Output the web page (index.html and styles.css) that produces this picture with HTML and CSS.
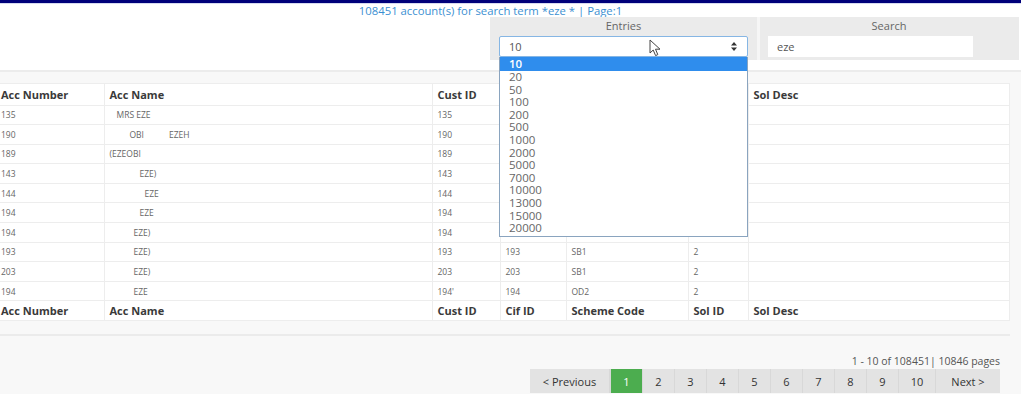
FILE: index.html
```html
<!DOCTYPE html>
<html>
  <head>
    <title>Accounts</title>
    <link rel="stylesheet" href="styles.css">
  </head>
  <body>
    <div class="topbar"></div>
    <div class="summary">108451 account(s) for search term *eze * | Page:1</div>

    <div class="toolbar">
      <div class="filters">
        <div class="filter">
          <label>Entries</label>
          <div class="select-wrap">
            <div class="select">
              <span>10</span>
              <svg class="caret" width="6" height="9" viewBox="0 0 6 9">
                <path d="M3 0 L6 3.5 L0 3.5 Z M3 9 L6 5.5 L0 5.5 Z" fill="#333"/>
              </svg>
            </div>
            <svg class="pointer" width="13" height="18" viewBox="0 0 13 18">
              <path d="M1 1 L1 14 L4.2 11 L6.6 16.6 L8.8 15.6 L6.5 10.2 L11 10.2 Z" fill="#fff" stroke="#444" stroke-width="1" stroke-linejoin="round"/>
            </svg>
            <ul class="options">
              <li class="active">10</li>
              <li>20</li>
              <li>50</li>
              <li>100</li>
              <li>200</li>
              <li>500</li>
              <li>1000</li>
              <li>2000</li>
              <li>5000</li>
              <li>7000</li>
              <li>10000</li>
              <li>13000</li>
              <li>15000</li>
              <li>20000</li>
            </ul>
          </div>
        </div>
        <div class="filter">
          <label>Search</label>
          <input type="text" class="search-input" value="eze">
        </div>
      </div>
    </div>

    <div class="content">
      <table class="accounts">
        <colgroup>
          <col class="c-num">
          <col class="c-name">
          <col class="c-cust">
          <col class="c-cif">
          <col class="c-scheme">
          <col class="c-sol">
          <col>
        </colgroup>
        <thead>
          <tr>
            <th>Acc Number</th>
            <th>Acc Name</th>
            <th>Cust ID</th>
            <th>Cif ID</th>
            <th>Scheme Code</th>
            <th>Sol ID</th>
            <th>Sol Desc</th>
          </tr>
        </thead>
        <tbody>
          <!-- cif / scheme / sol cells of the first rows sit under the open dropdown -->
          <tr>
            <td>135</td><td><span class="ind-7">MRS EZE</span></td><td>135</td><td></td><td></td><td></td><td></td>
          </tr>
          <tr>
            <td>190</td><td><span class="ind-20">OBI</span><span class="gap">EZEH</span></td><td>190</td><td></td><td></td><td></td><td></td>
          </tr>
          <tr>
            <td>189</td><td>(EZEOBI</td><td>189</td><td></td><td></td><td></td><td></td>
          </tr>
          <tr>
            <td>143</td><td><span class="ind-30">EZE)</span></td><td>143</td><td></td><td></td><td></td><td></td>
          </tr>
          <tr>
            <td>144</td><td><span class="ind-35">EZE</span></td><td>144</td><td></td><td></td><td></td><td></td>
          </tr>
          <tr>
            <td>194</td><td><span class="ind-30">EZE</span></td><td>194</td><td></td><td></td><td></td><td></td>
          </tr>
          <tr>
            <td>194</td><td><span class="ind-24">EZE)</span></td><td>194</td><td></td><td></td><td></td><td></td>
          </tr>
          <tr>
            <td>193</td><td><span class="ind-24">EZE)</span></td><td>193</td><td>193</td><td>SB1</td><td>2</td><td></td>
          </tr>
          <tr>
            <td>203</td><td><span class="ind-24">EZE)</span></td><td>203</td><td>203</td><td>SB1</td><td>2</td><td></td>
          </tr>
          <tr>
            <td>194</td><td><span class="ind-24">EZE</span></td><td>194'</td><td>194</td><td>OD2</td><td>2</td><td></td>
          </tr>
        </tbody>
        <tfoot>
          <tr>
            <th>Acc Number</th>
            <th>Acc Name</th>
            <th>Cust ID</th>
            <th>Cif ID</th>
            <th>Scheme Code</th>
            <th>Sol ID</th>
            <th>Sol Desc</th>
          </tr>
        </tfoot>
      </table>

      <div class="footer">
        <div class="page-info">1 - 10 of 108451| 10846 pages</div>
        <div class="pager">
          <a class="page-btn wide">&lt; Previous</a>
          <a class="page-btn current">1</a>
          <a class="page-btn">2</a>
          <a class="page-btn">3</a>
          <a class="page-btn">4</a>
          <a class="page-btn">5</a>
          <a class="page-btn">6</a>
          <a class="page-btn">7</a>
          <a class="page-btn">8</a>
          <a class="page-btn">9</a>
          <a class="page-btn ten">10</a>
          <a class="page-btn next">Next &gt;</a>
        </div>
      </div>
    </div>
  </body>
</html>
```

FILE: styles.css
```css
body {
  margin: 0;
  font-family: "Open Sans", "Liberation Sans", sans-serif;
  color: #555;
  background: #fff;
}
.topbar {
  height: 3px;
  background-color: #00007a;
  border-bottom: 1px solid #d6daf0;
}
.summary {
  height: 13px;
  line-height: 13px;
  font-size: 11.3px;
  color: #3b8fd2;
  text-align: center;
  padding-right: 40px;
}
.toolbar {
  display: flex;
  justify-content: flex-end;
  padding-right: 2px;
  padding-bottom: 10px;
  border-bottom: 2px solid #ececec;
}
.filters {
  display: flex;
  gap: 3px;
  width: 529px;
  height: 43px;
  background: #f6f6f6;
}
.filter {
  display: flex;
  flex-direction: column;
  align-items: flex-start;
  background: #ebebeb;
  padding: 0 9px;
}
.filter:first-child {
  width: 249px;
}
.filter:last-child {
  flex: 1;
  padding-left: 8px;
}
.filter label {
  align-self: center;
  font-size: 11px;
  line-height: 17px;
  color: #666;
}
.select-wrap {
  position: relative;
  width: 249px;
}
.select {
  display: flex;
  align-items: center;
  justify-content: space-between;
  box-sizing: border-box;
  height: 21px;
  margin-top: 2px;
  padding: 0 10px 0 9px;
  background: #fff;
  border: 1px solid #86b6e4;
  border-radius: 2px;
  font-size: 11px;
  color: #555;
}
.pointer {
  position: absolute;
  left: 150px;
  top: 5px;
}
.options {
  position: absolute;
  top: 23px;
  left: 0;
  width: 249px;
  box-sizing: border-box;
  margin: 0;
  padding: 0 0 1px;
  list-style: none;
  background: #fff;
  border: 1px solid #8aa4bf;
  border-top: none;
  z-index: 5;
}
.options li {
  height: 12.6px;
  line-height: 12.6px;
  padding-left: 9px;
  font-size: 11.5px;
  color: #666;
}
.options li.active {
  height: 14px;
  line-height: 14px;
  background: #2f8ded;
  color: #fff;
  font-weight: 600;
}
.search-input {
  box-sizing: border-box;
  width: 205px;
  height: 21px;
  margin-top: 2px;
  padding: 0 9px;
  border: none;
  background: #fff;
  font-family: inherit;
  font-size: 11px;
  color: #555;
}
.content {
  background: #f8f8f8;
  padding: 11px 11px 0 0;
  min-height: 320px;
}
.accounts {
  width: 1010px;
  table-layout: fixed;
  border-collapse: collapse;
  background: #fff;
}
.c-num { width: 104px; }
.c-name { width: 328px; }
.c-cust { width: 68px; }
.c-cif { width: 66px; }
.c-scheme { width: 122px; }
.c-sol { width: 60px; }
.accounts th,
.accounts td {
  height: 18.6px;
  padding: 0 5px;
  border: 1px solid #ededed;
  text-align: left;
  white-space: pre;
  overflow: hidden;
}
.accounts thead th {
  height: 20.5px;
}
.accounts th {
  font-size: 11px;
  font-weight: 700;
  color: #3a3a3a;
}
.accounts td {
  font-size: 8.5px;
  color: #666;
}
.accounts th:first-child,
.accounts td:first-child {
  padding-left: 1px;
  border-left: none;
}
.ind-7 { padding-left: 7px; }
.ind-20 { padding-left: 20px; }
.ind-24 { padding-left: 24px; }
.ind-30 { padding-left: 30px; }
.ind-35 { padding-left: 35px; }
.gap { padding-left: 25px; }
.footer {
  margin-top: 13px;
  border-top: 2px solid #ebebeb;
  padding-top: 19px;
  display: flex;
  flex-direction: column;
  align-items: flex-end;
  padding-right: 10px;
}
.page-info {
  font-size: 10.5px;
  line-height: 13px;
  color: #555;
}
.pager {
  display: flex;
  margin-top: 1px;
  gap: 1px;
  background: #d8d8d8;
}
.page-btn {
  display: flex;
  align-items: center;
  justify-content: center;
  width: 31px;
  height: 24px;
  background: #e3e3e3;
  font-size: 11px;
  color: #333;
  cursor: pointer;
}
.page-btn.wide {
  width: 79px;
}
.page-btn.current {
  background: #4cad4f;
  color: #fff;
  margin-left: 1px;
}
.page-btn.ten {
  width: 36px;
}
.page-btn.next {
  width: 64px;
}
```
